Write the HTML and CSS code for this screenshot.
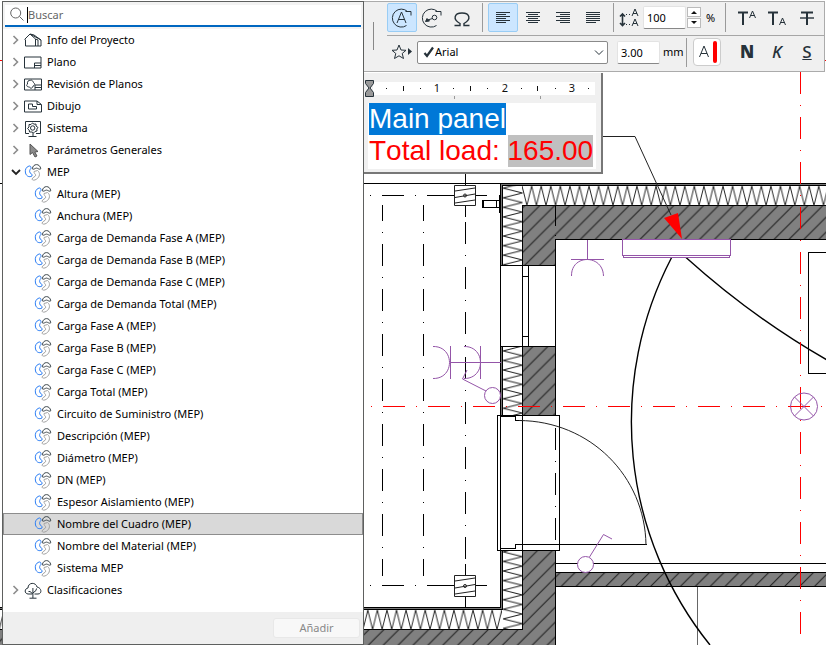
FILE: index.html
```html
<!DOCTYPE html>
<html lang="es">
<head>
<meta charset="utf-8">
<title>Editor de texto</title>
<link rel="stylesheet" href="styles.css">
</head>
<body>
<svg class="plan" viewBox="0 0 826 645" preserveAspectRatio="xMinYMin slice" aria-hidden="true">
  <defs>
    <pattern id="hatch" patternUnits="userSpaceOnUse" x="15.2" width="14.9" height="14.9">
      <rect width="15" height="15" fill="#808080"/>
      <path d="M-2 16.9L16.9 -2M-2 2L2 -2M12.9 16.9L16.9 12.9" stroke="#1c1c1c" stroke-width="1.1"/>
    </pattern>
    <pattern id="insH" patternUnits="userSpaceOnUse" x="608.2" y="185" width="9.57" height="21">
      <path d="M0 1L4.8 20.5L9.57 1" fill="none" stroke="#222"/>
    </pattern>
    <pattern id="insB" patternUnits="userSpaceOnUse" x="367.8" y="609" width="9.57" height="21">
      <path d="M0 1L4.8 20.5L9.57 1" fill="none" stroke="#222"/>
    </pattern>
    <pattern id="insV" patternUnits="userSpaceOnUse" x="502" y="188.2" width="21" height="9.57">
      <path d="M1 0L20.5 4.8L1 9.57" fill="none" stroke="#222"/>
    </pattern>
  </defs>
  <g class="wall">
    <path d="M522.5 205.5H840V239.5H555.5V265.5H522.5Z"/>
    <path d="M522.5 346.5H555.5V415.5H522.5Z"/>
    <path d="M522.5 550.5H555.5V660H-9V629.5H522.5Z"/>
    <path d="M555.5 572.5H840V586.5H555.5Z"/>
  </g>
  <path fill="url(#insH)" d="M522 185H826V206H522Z"/>
  <path fill="url(#insV)" d="M502 186H523V265H502ZM502 347H523V415H502ZM502 551H523V629H502Z"/>
  <path fill="url(#insB)" d="M0 609H502V630H0Z"/>
  <g class="line">
    <path stroke="#777" d="M501.5 265V184.5H826M501.5 347V415M501.5 551V608.5H0"/>
    <path d="M0 183.5H826M500.5 183V607.5H0M502.5 265V185.5H826M502.5 347V415M502.5 551V609.5H0"/>
    <path d="M500 265.5H555M555.5 265V346M555.5 205V226M555.5 235v1M500 346.5H555M522.5 205V630M528.5 265V346M522 276.5H528M522 336.5H528"/>
    <path d="M497.5 415.5H559.5V550.5H497.5ZM501 416.5H515.5V420.5H522M501 548.5H515.5V544.5H646.5"/>
    <path d="M555 563.5H826M808.5 252.5H840V373.5H808.5Z"/>
    <path stroke="#666" d="M697.5 587V645"/>
    <path d="M482.5 200.5H499V207.5H482.5ZM483.5 200V207M496.5 200V207M499.5 195V213"/>
    <path class="dash" stroke-dashoffset="6" d="M382.5 205V576M423.5 205V576"/>
    <path class="dash" d="M465.5 222V560"/>
    <path class="dash" d="M555.5 428V545"/>
    <path d="M465.5 172V185M465.5 206V217M465.5 564V576M465.5 597V607"/>
    <path d="M370 195.5h1M382 195.5H404M415 195.5h1M427 195.5H454M476 195.5H487M370 585.5h1M382 585.5H404M415 585.5h1M427 585.5H454M476 585.5H487"/>
  </g>
  <g class="thin">
    <path fill="#fff" d="M454.5 185.5H475.5V205.5H454.5ZM454.5 575.5H475.5V596.5H454.5Z"/>
    <path d="M455 191L475 188M455 197.500L475 194M455 203L475 200M455 581L475 578M455 588L475 584.500M455 594L475 591"/>
    <circle cx="465" cy="195.500" r="1.500"/><circle cx="465" cy="586" r="1.500"/>
    <path d="M519 420.500C590 421 645 476 646 545"/>
    <path d="M603 136.500H635L671 215"/>
    <path class="wire" d="M671.600 257.500A356 356 0 0 0 710 645M686 257.500Q752 317 827 360"/>
  </g>
  <path class="red dash" d="M383 406.500H826"/>
  <path class="red" d="M371 406.500h1M0 60.500H826"/>
  <path class="red dash" d="M800.500 72V645"/>
  <path fill="#f00" d="M664 218L678 213L682 239Z"/>
  <g class="device">
    <path class="crisp" fill="#fff" d="M622.500 239.500H730.500V255.500H622.500Z"/>
    <path class="crisp" d="M623.500 255V257.500H729.500V255M587.500 240V259M571 259.500H604M450.500 346V379M480.500 346V379M450 362.500H501"/>
    <path d="M571.500 276C571 254 603 254 603.500 276M433 346.500C455 346 455 379 433 378.500M464 346.500C486 346 486 379 464 378.500"/>
    <path d="M486 391L462.500 379L467 370M589.500 557L603.500 534.500L612 539"/>
    <circle cx="492.500" cy="395.500" r="8"/><circle cx="585.500" cy="564.500" r="8" fill="#fff"/>
    <circle cx="804" cy="406.500" r="13.500"/><path d="M794.500 397L813.500 416M813.500 397L794.500 416"/>
  </g>
</svg>

<svg class="sprite">
  <symbol id="chev" viewBox="0 0 8 10"><path d="M1.500 1L5.500 5L1.500 9" fill="none" stroke="#8c8c8c" stroke-width="1.600"/></symbol>
  <symbol id="open" viewBox="0 0 10 8"><path d="M1 2L5 6L9 2" fill="none" stroke="#222" stroke-width="1.800"/></symbol>
  <symbol id="mep" viewBox="0 0 17 17"><g fill="none">
    <path stroke="#2f80f5" d="M4.500 2C1.500 3 .2 6 1 9C2 12.500 5 13.500 7.500 12C7.800 10.500 7 9.500 5.500 8.800C4.800 7.500 5 6 6.500 4.300C6.600 2.600 5.800 1.700 4.500 2Z"/>
    <path stroke="#3c464b" d="M7.800 4.800C8.600-.8 15.400-.8 16.300 4.800C15 6 13.500 4.200 12 4.100C10.500 4.200 9 6 7.800 4.800Z"/>
    <path stroke="#a2a2a2" d="M9.600 7.500L13 6.500C16 8.500 15.500 13 12 15.200C10 16.500 8 16.500 7.500 15.200C8 13 11 13 11.200 11.200C11.200 9.800 9 9.400 9.600 7.500Z"/></g></symbol>
  <symbol id="house" viewBox="0 0 18 16"><path d="M.5 7L6 1.500L11.500 6.500V13.500H1.500V7M6 1.500L10 2.500L17 7.500V13.500H11.500M7 2L17 7.500M11.500 6.500L14 7.500V13.500"/></symbol>
  <symbol id="sheet" viewBox="0 0 18 16"><path d="M1 2.500H17V13.500H.500V2.500ZM17 8.500H10.500V13.500M10.500 11H17"/></symbol>
  <symbol id="rev" viewBox="0 0 18 16"><path d="M.500 2.500H17.500V13.500H.500ZM17 8.500H11V13.500M11 11H17M6.500 3.800C8 3 9 5 9.500 6C11.500 7.500 10.500 9 9 9.500C8.500 12 6.500 12.500 5.500 10.500C2.500 10.500 2 8.500 3.500 7.500C3 5 4.500 3.500 6.500 3.800Z"/></symbol>
  <symbol id="drawing" viewBox="0 0 18 16"><path d="M.500 2.500H13L17.500 6V13.500H.500ZM13 2.500V6H17M4.500 5.500H8.500V8H12.500V10.500H4.500Z"/></symbol>
  <symbol id="system" viewBox="0 0 18 17"><path d="M5 13.500H1.500V1.500H16.500V13.500H12M9 13V16.500M4.500 16.500H12.500M8.500 3L10 4.200L12 4L12 6L14 7.500L12.800 9L13 11L11 11.500L9.500 13L8 12L5.500 12L5.200 10L3.500 8.500L5 7L5 4.500L7 4.500Z"/><circle cx="8.700" cy="8" r="2.200"/></symbol>
  <symbol id="cursor" viewBox="0 0 18 16"><path fill="#8c8c8c" stroke="#555" d="M6 1.500V12L8.500 10L11 14.500L13 13.500L10.800 9.500L14 9Z"/></symbol>
  <symbol id="tree" viewBox="0 0 18 17"><path d="M8 12H4C0 11.500 .500 6.500 4 6C4 0 12 0 13 5C18 6 18 12 14 12H10.500M8.900 6V16M5.500 16.200H12.500M8.900 12L6 9.500H4.500M8.900 11L12 8.500L12.500 6.500"/></symbol>
</svg>

<main class="app">
  <section class="panel">
    <div class="search">
      <label class="field"><svg width="18" height="18" viewBox="0 0 18 18" aria-hidden="true"><path d="M10.500 10.500L14.500 14.500" stroke="#666"/><circle cx="6.700" cy="7" r="5" fill="none" stroke="#666"/></svg><input type="search" placeholder="Buscar" aria-label="Buscar"></label>
    </div>
    <ul class="list">
      <li><button class="row"><svg class="exp"><use href="#chev"/></svg><svg class="ico"><use href="#house"/></svg>Info del Proyecto</button></li>
      <li><button class="row"><svg class="exp"><use href="#chev"/></svg><svg class="ico"><use href="#sheet"/></svg>Plano</button></li>
      <li><button class="row"><svg class="exp"><use href="#chev"/></svg><svg class="ico"><use href="#rev"/></svg>Revisión de Planos</button></li>
      <li><button class="row"><svg class="exp"><use href="#chev"/></svg><svg class="ico"><use href="#drawing"/></svg>Dibujo</button></li>
      <li><button class="row"><svg class="exp"><use href="#chev"/></svg><svg class="ico"><use href="#system"/></svg>Sistema</button></li>
      <li><button class="row"><svg class="exp"><use href="#chev"/></svg><svg class="ico"><use href="#cursor"/></svg>Parámetros Generales</button></li>
      <li><button class="row" aria-expanded="true"><svg class="exp"><use href="#open"/></svg><svg class="ico"><use href="#mep"/></svg>MEP</button>
        <ul>
          <li><button class="row child"><svg class="ico"><use href="#mep"/></svg>Altura (MEP)</button></li>
          <li><button class="row child"><svg class="ico"><use href="#mep"/></svg>Anchura (MEP)</button></li>
          <li><button class="row child"><svg class="ico"><use href="#mep"/></svg>Carga de Demanda Fase A (MEP)</button></li>
          <li><button class="row child"><svg class="ico"><use href="#mep"/></svg>Carga de Demanda Fase B (MEP)</button></li>
          <li><button class="row child"><svg class="ico"><use href="#mep"/></svg>Carga de Demanda Fase C (MEP)</button></li>
          <li><button class="row child"><svg class="ico"><use href="#mep"/></svg>Carga de Demanda Total (MEP)</button></li>
          <li><button class="row child"><svg class="ico"><use href="#mep"/></svg>Carga Fase A (MEP)</button></li>
          <li><button class="row child"><svg class="ico"><use href="#mep"/></svg>Carga Fase B (MEP)</button></li>
          <li><button class="row child"><svg class="ico"><use href="#mep"/></svg>Carga Fase C (MEP)</button></li>
          <li><button class="row child"><svg class="ico"><use href="#mep"/></svg>Carga Total (MEP)</button></li>
          <li><button class="row child"><svg class="ico"><use href="#mep"/></svg>Circuito de Suministro (MEP)</button></li>
          <li><button class="row child"><svg class="ico"><use href="#mep"/></svg>Descripción (MEP)</button></li>
          <li><button class="row child"><svg class="ico"><use href="#mep"/></svg>Diámetro (MEP)</button></li>
          <li><button class="row child"><svg class="ico"><use href="#mep"/></svg>DN (MEP)</button></li>
          <li><button class="row child"><svg class="ico"><use href="#mep"/></svg>Espesor Aislamiento (MEP)</button></li>
          <li><button class="row child selected"><svg class="ico"><use href="#mep"/></svg>Nombre del Cuadro (MEP)</button></li>
          <li><button class="row child"><svg class="ico"><use href="#mep"/></svg>Nombre del Material (MEP)</button></li>
          <li><button class="row child"><svg class="ico"><use href="#mep"/></svg>Sistema MEP</button></li>
        </ul>
      </li>
      <li><button class="row"><svg class="exp"><use href="#chev"/></svg><svg class="ico"><use href="#tree"/></svg>Clasificaciones</button></li>
    </ul>
    <footer class="foot"><button class="add" disabled>Añadir</button></footer>
  </section>

  <div class="side">
    <section class="toolbar">
      <span class="grip"></span>
      <div class="rows">
        <div class="bar top">
          <button class="tool on" aria-label="Texto girado"><svg viewBox="0 0 30 30"><path d="M20.500 8.500A9 9 0 1 0 19.500 22.500M18.500 8.500H24V12.500"/><path d="M10 20L14.500 9L19 20M11.500 16.500H17.500"/></svg></button>
          <button class="tool" aria-label="Girar"><svg viewBox="0 0 30 30"><path d="M20.500 8.500A9 9 0 1 0 19.500 22.500M18.500 8.500H24V12.500M9 17.500L15.500 15.500"/><circle cx="17.500" cy="14.500" r="2.300"/><path fill="#26323a" d="M8.500 18.500L10 15.500L12.500 18Z"/></svg></button>
          <button class="tool" aria-label="Símbolo"><svg viewBox="0 0 30 30"><path d="M7.500 22.500H13V20.500C5.500 16.500 7 10 15 10S24.500 16.500 17 20.500V22.500H22.500" stroke-width="1.400"/></svg></button>
          <i class="sep"></i>
          <button class="tool on" aria-label="Alinear a la izquierda"><svg viewBox="0 0 30 30"><path class="crisp" d="M8 9.500H22M8 11.500H18M8 13.500H22M8 15.500H18M8 17.500H22M8 19.500H18"/></svg></button>
          <button class="tool" aria-label="Centrar"><svg viewBox="0 0 30 30"><path class="crisp" d="M8 9.500H22M10 11.500H20M8 13.500H22M10 15.500H20M8 17.500H22M10 19.500H20"/></svg></button>
          <button class="tool" aria-label="Alinear a la derecha"><svg viewBox="0 0 30 30"><path class="crisp" d="M8 9.500H22M12 11.500H22M8 13.500H22M12 15.500H22M8 17.500H22M12 19.500H22"/></svg></button>
          <button class="tool" aria-label="Justificar"><svg viewBox="0 0 30 30"><path class="crisp" d="M8 9.500H22M8 11.500H22M8 13.500H22M8 15.500H22M8 17.500H22M8 19.500H18"/></svg></button>
          <i class="sep"></i>
          <label class="num wide"><svg width="20" height="20" viewBox="0 0 20 20" aria-hidden="true"><path d="M3.500 7V17M1 8.500L3.500 6L6 8.500M1 15L3.500 17.500L6 15" stroke-width="1.600"/><path d="M7 6.500h1M10 6.500h1M7 16.500h1M10 16.500h1M13 8L16 1L19 8M14 5.500H18M13 18L16 11L19 18M14 15.500H18"/></svg><input value="100" aria-label="Interlineado"></label>
          <span class="spin"><button aria-label="Más"><svg viewBox="0 0 12 8"><path fill="#111" stroke="none" d="M3 6L6 3L9 6Z"/></svg></button><button aria-label="Menos"><svg viewBox="0 0 12 8"><path fill="#111" stroke="none" d="M3 2L6 5L9 2Z"/></svg></button></span>
          <span class="unit">%</span>
          <i class="sep"></i>
          <button class="tool" aria-label="Superíndice"><svg viewBox="0 0 30 30"><path d="M7 9.500H17M12 9V22" stroke-width="2"/><path d="M18.500 15L21.500 8L24.500 15M19.500 12.500H23.500"/></svg></button>
          <button class="tool" aria-label="Subíndice"><svg viewBox="0 0 30 30"><path d="M7 9.500H17M12 9V22" stroke-width="2"/><path d="M18.500 22L21.500 15L24.500 22M19.500 19.500H23.500"/></svg></button>
          <button class="tool" aria-label="Tachado"><svg viewBox="0 0 30 30"><path d="M10 9.500H22M16 9V22" stroke-width="2"/><path d="M9 15H23" stroke-width="1.400"/></svg></button>
        </div>
        <div class="bar">
          <button class="fav" aria-label="Favoritos"><svg viewBox="0 0 26 20"><path d="M12 3L14 8L19 8.300L15.200 11.500L16.500 16.500L12 13.800L7.500 16.500L8.800 11.500L5 8.300L10 8Z"/><path fill="#26323a" stroke="none" d="M21 6L25 9.500L21 13Z"/></svg></button>
          <label class="font"><svg width="12" height="12" viewBox="0 0 12 12" aria-hidden="true"><path d="M1.500 7L4 10L10 1.500" stroke-width="2.200"/></svg><select aria-label="Fuente"><option>Arial</option></select><svg width="12" height="12" viewBox="0 0 12 12" aria-hidden="true"><path d="M2 4.500L6 8.500L10 4.500"/></svg></label>
          <label class="num size"><input value="3.00" aria-label="Altura del texto"></label>
          <span class="unit mm">mm</span>
          <i class="sep"></i>
          <button class="color" aria-label="Color del texto"><svg viewBox="0 0 26 26"><path d="M5.500 18L10 7L14.500 18M7 14.500H13"/><path d="M21 4V22" stroke="#f00" stroke-width="4" stroke-linecap="round"/></svg></button>
          <span class="spacer"></span>
          <button class="tool bold">N</button>
          <button class="tool italic">K</button>
          <button class="tool under">S</button>
        </div>
      </div>
    </section>

    <section class="editor">
      <svg class="ruler" viewBox="0 0 236 20" role="img" aria-label="Regla">
        <path fill="#fff" stroke="none" d="M8 2H230V15H8Z"/>
        <path class="crisp" stroke="#111" d="M21 8.500h1M38.500 6V11M55 8.500h1M88 8.500h1M105.500 6V11M122 8.500h1M156 8.500h1M172.500 6V11M190 8.500h1M223 8.500h1"/>
        <path class="crisp" stroke="#999" d="M89.500 16V19M175.500 16V19"/>
        <path fill="#999" stroke="#26323a" d="M.500 .500H8.500V3.500L5 8L8.500 12.500V16.500H.500V12.500L4 8L.500 3.500Z"/>
        <text x="72" y="12">1</text><text x="140" y="12">2</text><text x="207" y="12">3</text>
      </svg>
      <div class="text" contenteditable="true" spellcheck="false"><p><span class="marked">Main panel</span></p><p>Total load: <span class="auto">165.00</span></p></div>
    </section>
  </div>
</main>
</body>
</html>
```
FILE: styles.css
```css
* { box-sizing: border-box; }
body { margin: 0; background: #fff; color: #000; font: 11px/16px "Noto Sans", "Open Sans", sans-serif; }
button, input, select { font: inherit; color: inherit; }
button { background: none; border: 0; padding: 0; }
ul, p { margin: 0; padding: 0; list-style: none; }
.sprite { display: none; }

/* Floor plan behind the palettes */
.plan { position: absolute; inset: 0; width: 100%; height: 100%; }
.plan path, .plan circle { stroke-width: 1; }
.wall path { fill: url(#hatch); stroke: #000; shape-rendering: crispEdges; }
.line { fill: none; stroke: #000; shape-rendering: crispEdges; }
.dash { stroke-dasharray: 22 11 1 11; }
.thin { fill: none; stroke: #222; }
.plan .wire { stroke: #000; stroke-width: 1.4; }
.red { fill: none; stroke: #f00; shape-rendering: crispEdges; }
.device { fill: none; stroke: #9455a8; }
.crisp { shape-rendering: crispEdges; }

.app { position: relative; display: grid; grid-template-columns: 362px minmax(0, 1fr); min-height: 100vh; padding: 1px 1px 0 2px; }

/* Parameter picker */
.panel { display: flex; flex-direction: column; background: #fff; border: 1px solid #5e605f; }
.search { padding: 3px 2px 2px; background: #f3f3f3; }
.field { display: flex; align-items: center; height: 22px; padding-left: 4px; background: #fff; border-bottom: 2px solid #0067c0; }
.field input { flex: 1; min-width: 0; padding: 0; border: 0; border-left: 1px solid #000; outline: 0; background: none; }
.field input::placeholder { color: #666; }
.list { flex: 1; }
.row { display: flex; align-items: center; width: 100%; height: 22px; padding-left: 7px; border: 1px solid transparent; text-align: left; }
.row.child { padding-left: 30px; }
.row.selected { background: #d9d9d9; border-color: #8d8d8d; }
.exp { width: 10px; height: 10px; margin-right: 3px; }
.ico { width: 18px; height: 17px; margin-right: 5px; fill: none; stroke: #26323a; }
.foot { display: flex; justify-content: flex-end; padding: 6px 3px; background: #efefef; }
.add { width: 87px; height: 20px; background: #f8f8f8; border: 1px solid #e8e8e8; border-radius: 3px; color: #888; }

/* Text toolbar */
.toolbar { display: flex; gap: 13px; padding: 1px 0 3px 9px; background: #f0f0f0; border: 1px solid #ababab; border-left: 0; }
.toolbar svg { fill: none; stroke: #26323a; }
.grip { align-self: center; width: 1px; height: 28px; background: #888; }
.rows { flex: 1; min-width: 0; }
.bar { display: flex; align-items: center; height: 32px; }
.bar.top { height: 33px; padding-bottom: 3px; border-bottom: 1px solid #a6a6a6; }
.tool { flex: none; width: 30px; height: 29px; border-radius: 2px; color: #26323a; }
.tool svg { display: block; width: 30px; height: 30px; }
.on { background: #cce6ff; border: 1px solid #99cdf5; }
.on svg { margin: -1px; }
.sep { flex: none; width: 1px; height: 29px; margin: 0 5px; background: #9a9a9a; }
.num { display: flex; align-items: center; gap: 4px; }
.num input { width: 43px; height: 23px; padding: 0 3px; background: #fff; border: 1px solid #e3e3e3; border-bottom-color: #888; border-radius: 2px; }
.spin { display: grid; gap: 1px; width: 14px; margin: 0 5px 0 1px; }
.spin button { display: flex; height: 10px; background: #fff; border: 1px solid #bbb; }
.unit { width: 14px; }
.fav { width: 26px; height: 20px; margin-right: 4px; }
.fav svg { display: block; }
.font { display: flex; align-items: center; flex: none; width: 191px; height: 23px; padding: 0 2px 0 5px; background: #fff; border: 1px solid #8a8a8a; border-radius: 2px; }
.font select { flex: 1; padding: 0; border: 0; background: none; appearance: none; }
.size { margin: 0 3px 0 9px; }
.mm { width: 18px; }
.color { flex: none; width: 28px; height: 28px; margin-left: 1px; background: #fff; border: 1px solid #ccc; border-radius: 4px; }
.spacer { flex: 1; max-width: 11px; }
.bold { font: 900 17px/20px "Noto Sans", sans-serif; }
.italic { font: italic 500 17px/20px "Noto Sans", sans-serif; }
.under { font: 500 17px/20px "Noto Sans", sans-serif; text-decoration: underline; }

/* Text block being edited */
.editor { width: 239px; margin-top: 1px; padding: 7px 5px 3px 1px; background: #f0f0f0; border-right: 2px solid #777; border-bottom: 2px solid #777; }
.ruler { display: block; width: 236px; height: 20px; margin-bottom: 3px; fill: none; }
.ruler text { fill: #111; text-anchor: middle; }
.text { margin-left: 3px; padding: 0 0 2px 1px; background: #fff; color: #f00; font: 28px/32px "Liberation Sans", Arial, sans-serif; font-kerning: none; white-space: nowrap; outline: 0; }
.marked, .auto { display: inline-block; }
.marked { background: #0078d7; color: #fff; }
.auto { background: #c0c0c0; }
```
